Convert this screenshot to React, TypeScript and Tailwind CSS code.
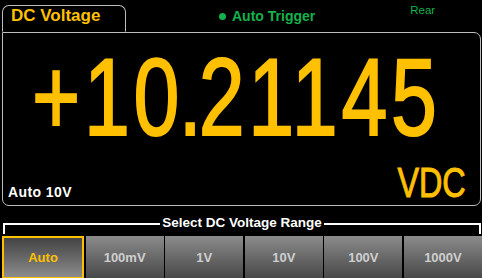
export default function App() {
  const ranges = ["Auto", "100mV", "1V", "10V", "100V", "1000V"]
  return (
    <div className="relative h-[278px] w-[482px] overflow-hidden bg-black font-['Liberation_Sans',sans-serif]">
      {/* measurement panel */}
      <div className="ml-[2px] mt-[5px] w-[479px]">
        <div className="flex h-[27px] items-start">
          <div className="relative z-10 -mb-px h-[27px] w-[124px] rounded-t-[7px] border border-[#bdbdbd] border-b-black bg-black pl-[8px] pt-px">
            <span className="block text-[17px] font-bold leading-none text-[#ffc000]">DC Voltage</span>
          </div>
          <div className="ml-[93px] mt-[4px] flex items-center gap-[6px]">
            <span className="h-[7px] w-[7px] rounded-full bg-[#14b24c]" />
            <span className="text-[14px] font-bold leading-none text-[#14b24c]">Auto Trigger</span>
          </div>
          <span className="ml-[95px] text-[11.5px] leading-none text-[#14b24c]">Rear</span>
        </div>
        <div className="flex h-[174px] flex-col rounded-b-[7px] rounded-tr-[7px] border border-[#bdbdbd]">
          <div className="mt-[17px] h-[94px] pl-[29px]">
            <span className="inline-block origin-left scale-x-[0.75] text-[110px] leading-[94px] tracking-[5px] text-[#ffc000] [-webkit-text-stroke:2px_#ffc000]">
              +1<span className="tracking-[-1px]">0</span>
              <span className="tracking-[-4px]">.</span>21145
            </span>
          </div>
          <div className="mt-auto flex items-baseline justify-between pb-px pl-[5px] pr-[14px]">
            <span className="text-[14px] font-bold leading-none tracking-[0.4px] text-white">Auto 10V</span>
            <span className="inline-block origin-right scale-x-[0.77] text-[42px] leading-none text-[#ffc000] [-webkit-text-stroke:1px_#ffc000]">
              VDC
            </span>
          </div>
        </div>
      </div>

      {/* range selector */}
      <div className="mt-[10px] flex items-start">
        <div className="ml-[3px] mt-[7px] h-[11px] flex-1 border-l-2 border-t-2 border-white" />
        <span className="px-[2px] text-[13.5px] font-bold leading-none text-white">Select DC Voltage Range</span>
        <div className="mr-px mt-[7px] h-[11px] flex-1 border-r-2 border-t-2 border-white" />
      </div>
      <div className="mt-[2px] flex h-[43px] gap-[1.5px] pl-[2px]">
        {ranges.map((r, i) =>
          i === 0 ? (
            <div
              key={r}
              className="flex flex-1 items-center justify-center border-2 border-[#ffc000] bg-linear-to-b from-[#444444] to-[#8c8c8c] text-[13px] font-bold text-[#ffc000]"
            >
              {r}
            </div>
          ) : (
            <div
              key={r}
              className="flex flex-1 items-center justify-center bg-linear-to-b from-[#8c8c8c] to-[#474747] text-[13px] font-bold text-[#cfcfcf]"
            >
              {r}
            </div>
          )
        )}
      </div>
    </div>
  )
}
